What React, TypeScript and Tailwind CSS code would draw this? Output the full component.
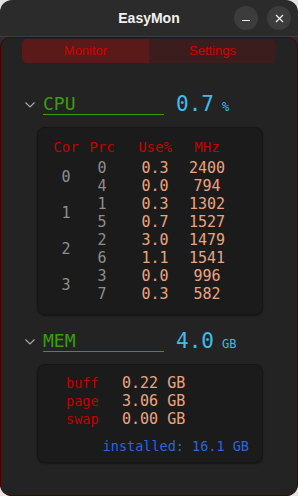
import React from 'react';

const mono = "font-['DejaVu_Sans_Mono',monospace]";

const cores = [
  { core: 0, rows: [['0', '0.3', '2400'], ['4', '0.0', '794']] },
  { core: 1, rows: [['1', '0.3', '1302'], ['5', '0.7', '1527']] },
  { core: 2, rows: [['2', '3.0', '1479'], ['6', '1.1', '1541']] },
  { core: 3, rows: [['3', '0.0', '996'], ['7', '0.3', '582']] },
];

const mem = [
  { label: 'buff', value: '0.22 GB' },
  { label: 'page', value: '3.06 GB' },
  { label: 'swap', value: '0.00 GB' },
];

const Chevron = () => (
  <svg width="10" height="6" viewBox="0 0 10 6" className="shrink-0">
    <polyline points="0.5,0.5 5,5 9.5,0.5" fill="none" stroke="#a8a8a8" strokeWidth="1.2" />
  </svg>
);

const SectionHeader = ({ name, value, unit }: { name: string; value: string; unit: string }) => (
  <div className="flex items-end pl-[24px]">
    <div className="mb-[7px]">
      <Chevron />
    </div>
    <div className={`ml-[8px] w-[121px] h-[21px] border-b border-[#3a9e0c] text-[18px] leading-[20px] text-[#3a9e0c] ${mono}`}>
      {name}
    </div>
    <div className={`ml-[12px] flex items-baseline h-[21px] ${mono}`}>
      <span className="text-[21px] leading-[20px] text-[#3cbdea]">{value}</span>
      <span className="ml-[8px] text-[12px] text-[#3cbdea]">{unit}</span>
    </div>
  </div>
);

export default function App() {
  return (
    <div className="w-[298px] h-[496px] bg-[#e4e4e4]">
      <div className="w-full h-full rounded-[12px] overflow-hidden bg-[#2b2b2b] flex flex-col">
        {/* title bar */}
        <div className="relative h-[37px] shrink-0 border-b border-[#3e3e3e] flex items-center justify-center">
          <span className="font-['Liberation_Sans',sans-serif] font-bold text-[14px] text-[#f2f2f2]">EasyMon</span>
          <div className="absolute right-[7px] top-[6px] flex gap-[9px]">
            <div className="w-[24px] h-[24px] rounded-full bg-[#3c3c3c] flex items-center justify-center">
              <div className="w-[8px] h-[1.5px] bg-[#eeeeee] mt-[5px]" />
            </div>
            <div className="w-[24px] h-[24px] rounded-full bg-[#3c3c3c] flex items-center justify-center">
              <svg width="9" height="9" viewBox="0 0 9 9">
                <path d="M1 1 L8 8 M8 1 L1 8" stroke="#f0f0f0" strokeWidth="1.2" />
              </svg>
            </div>
          </div>
        </div>

        {/* content */}
        <div className="flex-1 rounded-[10px] border border-[#4e0000] bg-[#232323] flex flex-col">
          <div className="mt-[1px] mx-[21px] h-[24px] flex font-['Liberation_Sans',sans-serif] text-[13px] text-[#d40000]">
            <div className="flex-1 rounded-l-[5px] bg-[#5a1a1a] flex items-center justify-center">Monitor</div>
            <div className="flex-1 rounded-r-[5px] bg-[#3b1d1d] flex items-center justify-center">Settings</div>
          </div>

          {/* CPU */}
          <div className="mt-[31px]">
            <SectionHeader name="CPU" value="0.7" unit="%" />
          </div>
          <div className={`mt-[12px] ml-[36px] w-[226px] rounded-[8px] border border-[#161616] bg-[#1b1b1b] shadow-[0_1px_2px_rgba(0,0,0,0.4)] pt-[10px] pb-[11px] pl-[13px] ${mono}`}>
            <div className="grid grid-cols-[30px_42px_64px_40px] text-[14px] leading-[18px] text-[#c80000] text-center">
              <span>Cor</span>
              <span>Prc</span>
              <span>Use%</span>
              <span>MHz</span>
            </div>
            <div className="mt-[3px] grid grid-cols-[30px_42px_64px_40px] auto-rows-[18px] text-[15px] leading-[18px] text-center">
              {cores.map((c) => (
                <React.Fragment key={c.core}>
                  <span className="col-start-1 row-span-2 flex items-center justify-center text-[#8e8e8e]">{c.core}</span>
                  {c.rows.map((r) => (
                    <React.Fragment key={r[0]}>
                      <span className="col-start-2 text-[#8e8e8e]">{r[0]}</span>
                      <span className="col-start-3 text-[#eca47f]">{r[1]}</span>
                      <span className="col-start-4 text-[#eca47f]">{r[2]}</span>
                    </React.Fragment>
                  ))}
                </React.Fragment>
              ))}
            </div>
          </div>

          {/* MEM */}
          <div className="mt-[16px]">
            <SectionHeader name="MEM" value="4.0" unit="GB" />
          </div>
          <div className={`mt-[12px] ml-[36px] w-[226px] rounded-[8px] border border-[#161616] bg-[#1b1b1b] shadow-[0_1px_2px_rgba(0,0,0,0.4)] pt-[9px] pb-[7px] pl-[28px] pr-[13px] ${mono}`}>
            {mem.map((m) => (
              <div key={m.label} className="flex items-baseline h-[18px] leading-[18px]">
                <span className="w-[56px] text-[13.5px] text-[#c40000]">{m.label}</span>
                <span className="text-[15px] text-[#eca47f]">{m.value}</span>
              </div>
            ))}
            <div className="mt-[9px] h-[18px] leading-[18px] text-right text-[13.5px] text-[#2e64dc]">installed: 16.1 GB</div>
          </div>
        </div>
      </div>
    </div>
  );
}
